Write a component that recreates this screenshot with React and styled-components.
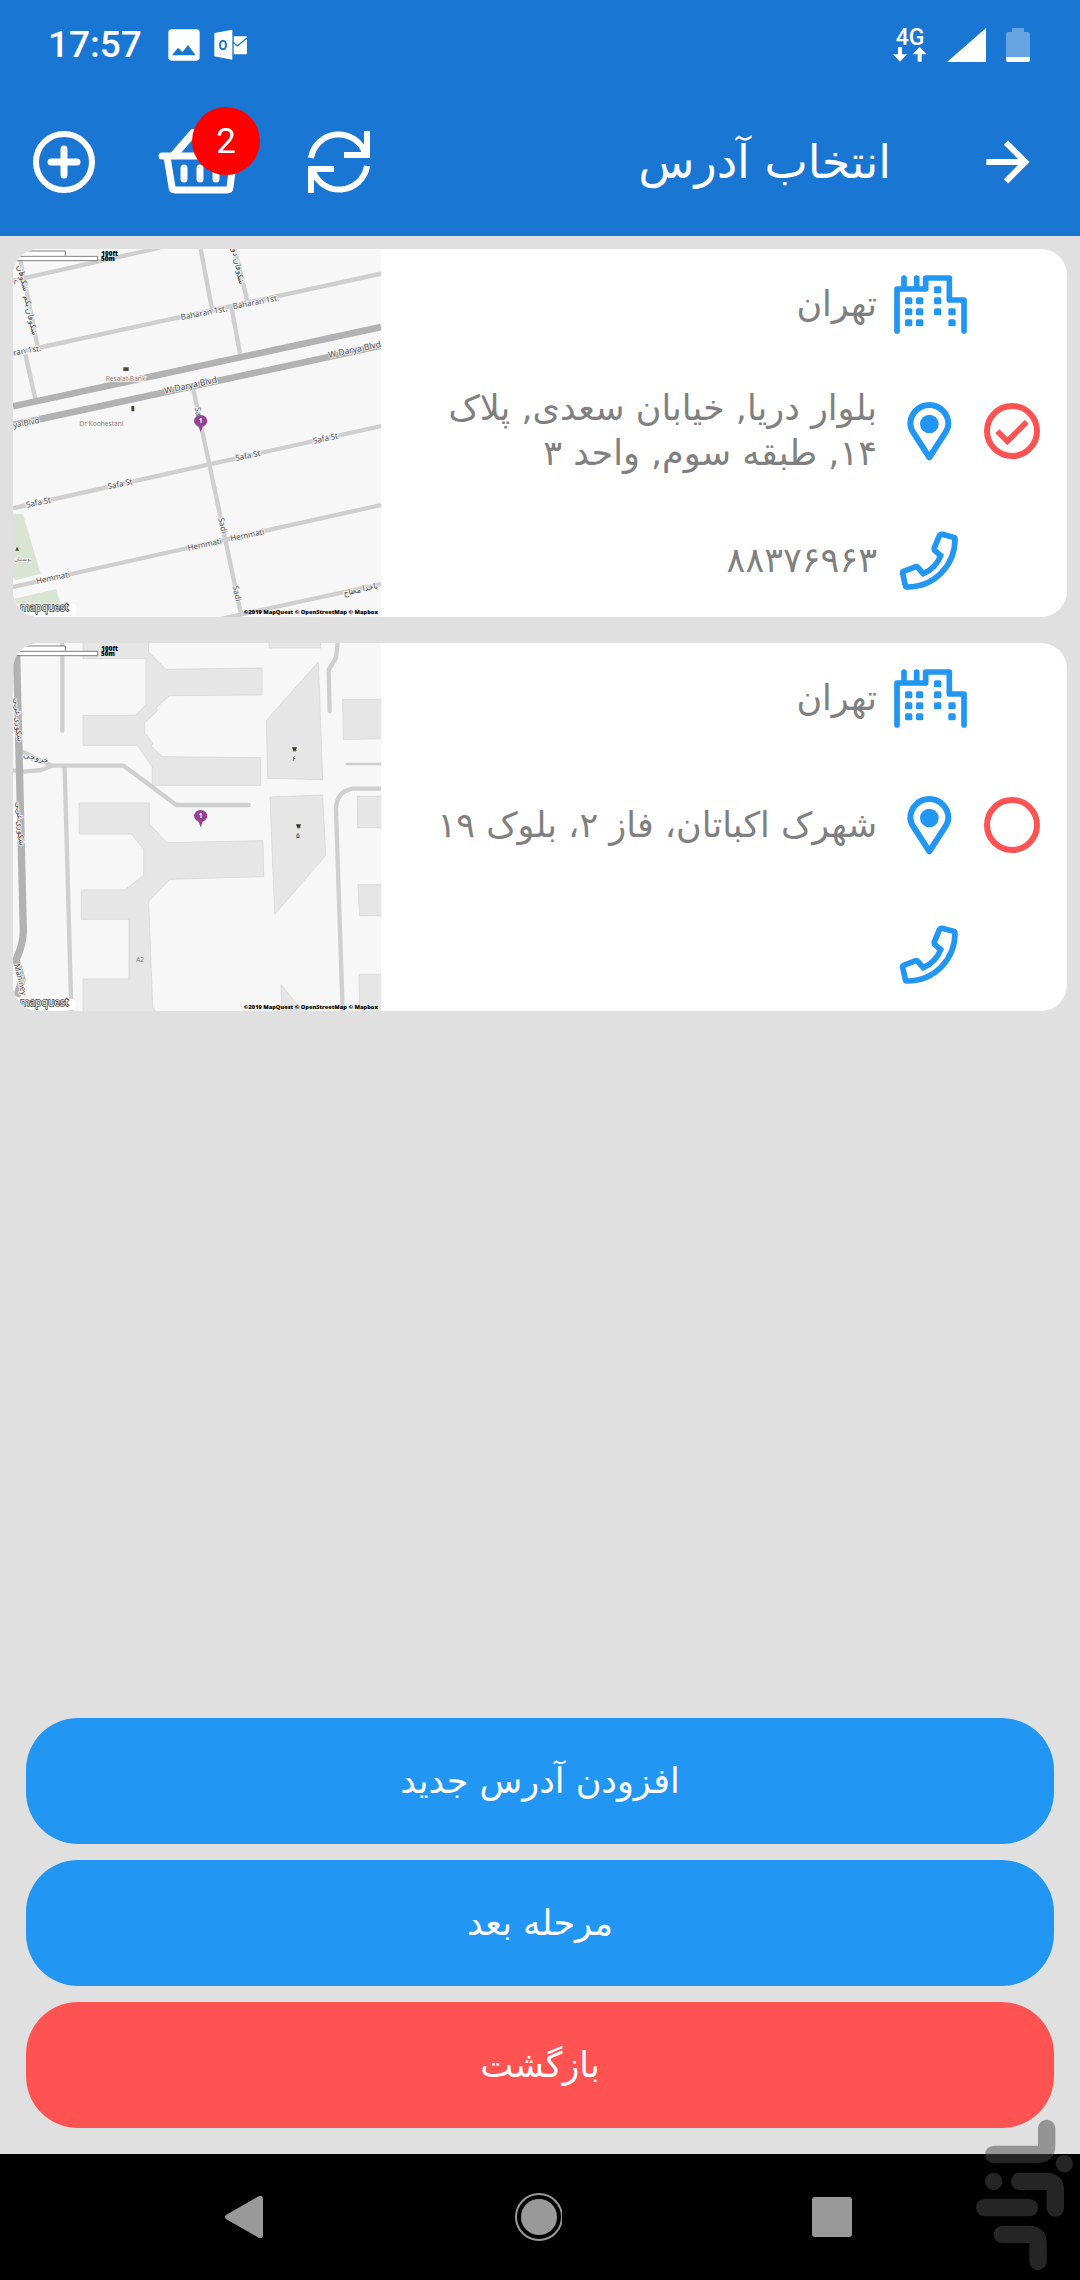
import React, { useState } from 'react';
import styled, { createGlobalStyle } from 'styled-components';

const GlobalStyle = createGlobalStyle`
  * {
    box-sizing: border-box;
  }

  body {
    margin: 0;
    background-color: #e0e0e0;
    font-family: "DejaVu Sans", sans-serif;
  }
`;

const Page = styled.div`
  position: relative;
  min-height: 100vh;
  display: flex;
  flex-direction: column;
`;

const Header = styled.header`
  background-color: #1976d2;
  color: #fff;
`;

const StatusBar = styled.div`
  display: flex;
  align-items: center;
  justify-content: space-between;
  height: 90px;
  padding: 0 50px 0 48px;
  font-family: Roboto, sans-serif;
`;

const StatusGroup = styled.div`
  display: flex;
  align-items: center;
  gap: ${(props) => props.$gap}px;
`;

const Clock = styled.span`
  margin-right: 12px;
  font-size: 37px;
  font-weight: 500;
  line-height: 44px;
`;

const Network = styled.div`
  display: flex;
  flex-direction: column;
  align-items: center;
  font-size: 23px;
  font-weight: 500;
  line-height: 19px;
`;

const Toolbar = styled.div`
  display: flex;
  align-items: center;
  height: 146px;
  padding: 0 50px 2px 33px;
`;

const IconButton = styled.button`
  position: relative;
  display: flex;
  margin: 0 ${(props) => props.$gap || 0}px 0 0;
  padding: 0;
  border: 0;
  background: none;
  color: inherit;
  cursor: pointer;
`;

const Badge = styled.span`
  position: absolute;
  top: -22px;
  right: -18px;
  width: 68px;
  height: 68px;
  border-radius: 50%;
  background-color: #ff0000;
  font-family: Roboto, sans-serif;
  font-size: 35px;
  line-height: 70px;
  text-align: center;
`;

const Title = styled.h1`
  flex: 1;
  margin: 0 95px 0 0;
  direction: rtl;
  font-size: 46px;
  font-weight: 400;
  line-height: 60px;
`;

const AddressList = styled.main`
  flex: 1;
  display: flex;
  flex-direction: column;
  gap: 26px;
  padding: 13px;
`;

const Card = styled.article`
  display: flex;
  min-height: 368px;
  overflow: hidden;
  border-radius: 26px;
  background-color: #fff;
`;

const MapImage = styled.svg`
  flex: none;
  width: 368px;
  height: 368px;
  background-color: #f7f7f7;
  font-family: "Open Sans", sans-serif;
`;

const Details = styled.div`
  flex: 1;
  display: grid;
  grid-template-columns: 56px 73px 1fr;
  grid-template-rows: 110px 1fr 114px;
  align-items: center;
  column-gap: 17px;
  padding: 0 27px 0 24px;
  direction: rtl;
  color: #2296f3;
`;

const Pick = styled.div`
  grid-row: 2;
  grid-column: 1;
  display: grid;
  color: #ff5353;

  > * {
    grid-area: 1 / 1;
  }

  svg {
    pointer-events: none;
  }
`;

const Radio = styled.input`
  appearance: none;
  width: 56px;
  height: 56px;
  margin: 0;
  border: 6px solid #ff5353;
  border-radius: 50%;
  cursor: pointer;
`;

const IconCell = styled.div`
  grid-column: 2;
  grid-row: ${(props) => props.$row};
  display: flex;
  justify-content: center;
`;

const DetailText = styled.label`
  grid-column: 3;
  grid-row: ${(props) => props.$row};
  color: #808080;
  font-size: 35px;
  line-height: 45px;
`;

const Actions = styled.div`
  display: flex;
  flex-direction: column;
  gap: 16px;
  padding: 26px;
`;

const ActionButton = styled.button`
  height: 126px;
  border: 0;
  border-radius: 52px;
  background-color: ${(props) => (props.$danger ? '#ff5353' : '#2296f3')};
  color: #fff;
  font-family: inherit;
  font-size: 35px;
  line-height: 45px;
  cursor: pointer;
`;

const NavBar = styled.nav`
  display: flex;
  align-items: center;
  justify-content: space-between;
  height: 126px;
  padding: 0 228px 0 225px;
  background-color: #000;
  color: #999;
`;

const StoreMark = styled.svg`
  position: absolute;
  right: 6px;
  bottom: 8px;
  width: 99px;
  height: 154px;
  opacity: 0.5;
  pointer-events: none;
`;

const PictureIcon = () => (
  <svg width="32" height="32" viewBox="53 56 96 96">
    <rect x="54" y="57" width="94" height="94" rx="10" fill="#fff" />
    <path d="M65 135L83 112L96 126L113 104L136 135Z" fill="#1976d2" />
  </svg>
);

const OutlookIcon = () => (
  <svg width="34" height="32" viewBox="191 56 102 96">
    <path d="M192 68L246 58V148L192 138Z" fill="#fff" />
    <rect x="250" y="78" width="40" height="54" rx="3" fill="#fff" />
    <path d="M248 96L261 107L291 82" fill="none" stroke="#1976d2" strokeWidth="4" />
    <ellipse cx="218" cy="104" rx="9" ry="13" fill="none" stroke="#1976d2" strokeWidth="6" />
  </svg>
);

const DataArrows = () => (
  <svg width="34" height="15" viewBox="46 109 102 45" fill="#fff">
    <path d="M61 109H73V131H88L67 153L46 131H61Z" />
    <path d="M120 153H132V131H147L126 109L105 131H120Z" />
  </svg>
);

const SignalIcon = () => (
  <svg width="39" height="34" viewBox="0 0 39 34" fill="#fff">
    <path d="M39 0V34H0Z" />
  </svg>
);

const BatteryIcon = () => (
  <svg width="24" height="34" viewBox="0 0 24 34">
    <path d="M6 0H18V4H22Q24 4 24 6V29H0V6Q0 4 2 4H6Z" fill="#66a4e1" />
    <path d="M0 29H24V32Q24 34 22 34H2Q0 34 0 32Z" fill="#fff" />
  </svg>
);

const AddIcon = () => (
  <svg width="62" height="62" viewBox="0 0 62 62" fill="none" stroke="currentColor">
    <circle cx="31" cy="31" r="28" strokeWidth="6" />
    <path d="M31 18V44M18 31H44" strokeWidth="7" strokeLinecap="round" />
  </svg>
);

const BasketIcon = () => (
  <svg width="84" height="66" viewBox="0 0 84 66" fill="none" stroke="currentColor" strokeWidth="7" strokeLinecap="round" strokeLinejoin="round">
    <path d="M4 27H80" />
    <path d="M9 28L14 58Q14 61 17 61H69Q72 61 72 58L76 28" />
    <path d="M16 26L36 3M68 26L48 3" strokeWidth="8" />
    <path d="M26 39V50M42 39V50M58 39V50" />
  </svg>
);

const SyncIcon = () => (
  <svg width="64" height="62" viewBox="0 0 64 62" fill="none" stroke="currentColor" strokeWidth="6">
    <path d="M4 27A28 28 0 0 1 58 22M60 35A28 28 0 0 1 6 40" />
    <path d="M60 0V24H37M4 62V38H27" />
  </svg>
);

const ArrowIcon = () => (
  <svg width="44" height="44" viewBox="319 390 132 132" fill="none" stroke="currentColor" strokeWidth="18">
    <path d="M320 456H440M379 398L437 456L379 514" />
  </svg>
);

const CityIcon = () => (
  <svg width="73" height="59" viewBox="42 44 219 177" fill="none" stroke="currentColor" strokeWidth="17" strokeLinecap="round" strokeLinejoin="round">
    <path d="M51 212V86H137V53H208V119H252V212M72 53V86M110 53V86" />
    <g fill="currentColor" stroke="none">
      {[[75, 111], [75, 144], [75, 177], [108, 111], [108, 144], [108, 177], [162, 78], [162, 111], [162, 144], [205, 144], [205, 177]].map(([x, y]) => (
        <rect key={`${x}-${y}`} x={x} y={y} width="22" height="21" rx="5" />
      ))}
    </g>
  </svg>
);

const PinIcon = () => (
  <svg width="47" height="59" viewBox="79 425 141 177" fill="none" stroke="currentColor" strokeWidth="18" strokeLinejoin="round">
    <path d="M146 591L100 520Q89 504 89 491A57 57 0 0 1 203 491Q203 504 192 520Z" />
    <circle cx="146" cy="491" r="28" fill="currentColor" stroke="none" />
  </svg>
);

const PhoneIcon = () => (
  <svg width="63" height="59" viewBox="55 808 189 177" fill="none" stroke="currentColor" strokeWidth="17">
    <path d="M184 818L218 827Q223 828 223 833C223 910 162 976 80 976Q75 976 74 971L66 935Q65 931 69 929L105 915Q109 914 112 918L128 936C150 928 172 905 180 882L162 866Q160 863 161 859L176 822Q179 817 184 818Z" />
  </svg>
);

const CheckMark = () => (
  <svg width="56" height="56" viewBox="312 432 168 168" fill="none" stroke="currentColor" strokeWidth="17">
    <path d="M352 517L382 547L440 489" />
  </svg>
);

const Label = ({ x, y, turn = 0, size = 24, color = '#444', anchor = 'start', children }) => (
  <text
    x={x}
    y={y}
    fontSize={size}
    fill={color}
    textAnchor={anchor}
    stroke="#f7f7f7"
    strokeWidth="5"
    paintOrder="stroke"
    transform={`rotate(${turn} ${x} ${y})`}
  >
    {children}
  </text>
);

const MapOverlay = () => (
  <>
    <path d="M602 592L596 575C588 572 582 565 582 558A20 18 0 0 1 622 558C622 565 616 572 608 575Z" fill="#954292" />
    <text x="602" y="564" fontSize="20" fontWeight="700" fill="#fff" textAnchor="middle">1</text>
    <path d="M39 48H196V62H39ZM39 64H293V77H39Z" fill="#fff" />
    <path d="M39 48H196V62M39 64H293V77H39" fill="none" stroke="#444" strokeWidth="2" />
    <text x="304" y="63" fontSize="19" fontWeight="800" fill="#000">100ft</text>
    <text x="303" y="78" fontSize="19" fontWeight="800" fill="#000">50m</text>
    <rect x="45" y="1106" width="184" height="34" rx="14" fill="#fff" />
    <text x="60" y="1129" fontSize="31" fill="#fff" stroke="#333" strokeWidth="4" paintOrder="stroke">mapquest</text>
    <text x="1134" y="1137" fontSize="17" fontWeight="800" fill="#000" textAnchor="end">
      ©2019 MapQuest © OpenStreetMap © Mapbox
    </text>
  </>
);

const StreetMap = () => (
  <MapImage viewBox="39 42 1104 1104" role="img" aria-label="W Darya Blvd">
    <path d="M39 836L69 838L122 1016L48 1036L39 1026ZM39 1092L168 1062L182 1106H39Z" fill="#d9e5d2" />
    <g fill="none" stroke="#cfcfcf" strokeWidth="13">
      <path d="M39 137L480 38M39 355L1143 116M39 820L628 688L1143 573M39 1056L1143 810M660 1152L1143 1047" />
      <path d="M54 42L113 335M76 358L106 492M602 42L636 222M704 42L742 197M694 214L720 356M580 464L628 688L722 1132" />
    </g>
    <path d="M39 514L1143 276M39 570L1143 332" fill="none" stroke="#b2b2b2" strokeWidth="20" />
    <Label x={41} y={362} turn={-10}>ran 1st.</Label>
    <Label x={41} y={148}>r</Label>
    <Label x={544} y={255} turn={-11}>Baharan 1st.</Label>
    <Label x={700} y={223} turn={-11}>Baharan 1st.</Label>
    <Label x={41} y={579} turn={-11}>ya Blvd</Label>
    <Label x={495} y={476} turn={-12} size={26}>W Darya Blvd</Label>
    <Label x={987} y={369} turn={-12} size={26}>W Darya Blvd</Label>
    <Label x={584} y={518} turn={80}>Sa</Label>
    <Label x={80} y={818} turn={-12}>Safa St</Label>
    <Label x={325} y={763} turn={-12}>Safa St</Label>
    <Label x={708} y={678} turn={-12}>Safa St</Label>
    <Label x={941} y={626} turn={-12}>Safa St</Label>
    <Label x={110} y={1047} turn={-12}>Hemmati</Label>
    <Label x={565} y={947} turn={-12}>Hemmati</Label>
    <Label x={693} y={919} turn={-12}>Hemmati</Label>
    <Label x={655} y={850} turn={78}>Sadi</Label>
    <Label x={698} y={1054} turn={78}>Sadi</Label>
    <Label x={317} y={439} size={20} color="#777">Resalat Bank</Label>
    <Label x={238} y={573} size={20} color="#777">Dr Koohestani</Label>
    <Label x={68} y={979} size={17} color="#777" anchor="middle">بوستان</Label>
    <Label x={52} y={92} turn={78}>شکوفان</Label>
    <Label x={71} y={184} turn={78}>شکوفان یکم</Label>
    <Label x={696} y={42} turn={78}>شکوفان دو</Label>
    <Label x={1031} y={1082} turn={-12}>باخدا محتاج</Label>
    <path d="M370 397H386V408H370ZM394 513H403V529H394ZM46 947L51 935L57 947Z" fill="#4b4638" />
    <MapOverlay />
  </MapImage>
);

const BlockMap = () => (
  <MapImage viewBox="39 39 1104 1104" role="img" aria-label="A2">
    <g fill="#e6e6e6" stroke="#d2d2d2" strokeWidth="2">
      <path d="M249 36H446V66L498 118L786 114V195L508 197L468 234L472 243L434 278V308L460 341L453 346L485 380L782 383V466H457V411L412 346H249V256H406L438 224V86H249Z" />
      <path d="M237 519H448V581L500 638L789 632L791 740L510 748L446 814L458 1130L470 1146H249V1047H387V868H244V780H374L431 736V658L394 612H238Z" />
      <path d="M807 36H962V54H807ZM955 96L968 449L803 445L799 271ZM810 501L968 495L977 677L824 853Z" />
      <path d="M1028 208H1146V326L1030 329ZM1072 499H1146V593H1073ZM1074 764H1146V857H1079ZM1077 1033H1146V1146H1079ZM843 1064L908 1143H846Z" />
    </g>
    <g fill="none" stroke="#cfcfcf" strokeWidth="13" strokeLinecap="round" strokeLinejoin="round">
      <path d="M187 39V302M64 364L156 407H371L529 525H746M39 421L70 425L124 420L156 407M194 414L214 1143" />
      <path d="M1013 39L1008 84L986 120L989 243M1143 476H1056Q1008 486 1008 540L1028 1143" />
      <path d="M1040 402H1143" strokeWidth="7" />
    </g>
    <path d="M39 110Q46 90 50 76L70 905Q70 940 48 990L66 1050L50 1100" fill="none" stroke="#b2b2b2" strokeWidth="22" />
    <Label x={42} y={205} turn={86}>شکوری غربی</Label>
    <Label x={48} y={516} turn={86}>شکوری غربی</Label>
    <Label x={70} y={381} turn={14}>خروجی</Label>
    <Label x={42} y={1004} turn={76}>Mahiney</Label>
    <text x="420" y="995" fontSize="20" fill="#777" textAnchor="middle">A2</text>
    <path d="M876 352H891L888 360H879ZM879 361H889V364H879ZM888 583H903L900 591H891ZM891 592H901V595H891Z" fill="#3d362c" />
    <text x="883" y="392" fontSize="20" fill="#333" textAnchor="middle">۶</text>
    <text x="894" y="625" fontSize="20" fill="#333" textAnchor="middle">۵</text>
    <MapOverlay />
  </MapImage>
);

const addresses = [
  {
    id: 'darya',
    city: 'تهران',
    address: 'بلوار دریا, خیابان سعدی, پلاک ۱۴, طبقه سوم, واحد ۳',
    phone: '۸۸۳۷۶۹۶۳',
    Map: StreetMap,
  },
  {
    id: 'ekbatan',
    city: 'تهران',
    address: 'شهرک اکباتان، فاز ۲، بلوک ۱۹',
    phone: '',
    Map: BlockMap,
  },
];

const AddressCard = ({ item, selected, onSelect }) => (
  <Card>
    <item.Map />
    <Details>
      <Pick>
        <Radio
          type="radio"
          name="address"
          id={item.id}
          checked={selected}
          onChange={() => onSelect(item.id)}
        />
        {selected && <CheckMark />}
      </Pick>
      <IconCell $row={1}><CityIcon /></IconCell>
      <DetailText $row={1} htmlFor={item.id}>{item.city}</DetailText>
      <IconCell $row={2}><PinIcon /></IconCell>
      <DetailText $row={2} htmlFor={item.id}>{item.address}</DetailText>
      <IconCell $row={3}><PhoneIcon /></IconCell>
      {item.phone && <DetailText $row={3} htmlFor={item.id}>{item.phone}</DetailText>}
    </Details>
  </Card>
);

function App() {
  const [selected, setSelected] = useState('darya');

  return (
    <Page>
      <GlobalStyle />
      <Header>
        <StatusBar>
          <StatusGroup $gap={14}>
            <Clock>17:57</Clock>
            <PictureIcon />
            <OutlookIcon />
          </StatusGroup>
          <StatusGroup $gap={20}>
            <Network>
              4G
              <DataArrows />
            </Network>
            <SignalIcon />
            <BatteryIcon />
          </StatusGroup>
        </StatusBar>
        <Toolbar>
          <IconButton $gap={63} aria-label="افزودن"><AddIcon /></IconButton>
          <IconButton $gap={65} aria-label="سبد خرید">
            <BasketIcon />
            <Badge>2</Badge>
          </IconButton>
          <IconButton aria-label="به‌روزرسانی"><SyncIcon /></IconButton>
          <Title>انتخاب آدرس</Title>
          <IconButton aria-label="بازگشت"><ArrowIcon /></IconButton>
        </Toolbar>
      </Header>
      <AddressList>
        {addresses.map((item) => (
          <AddressCard
            key={item.id}
            item={item}
            selected={item.id === selected}
            onSelect={setSelected}
          />
        ))}
      </AddressList>
      <Actions>
        <ActionButton>افزودن آدرس جدید</ActionButton>
        <ActionButton>مرحله بعد</ActionButton>
        <ActionButton $danger>بازگشت</ActionButton>
      </Actions>
      <NavBar>
        <IconButton aria-label="Back">
          <svg width="39" height="42" viewBox="0 0 39 42" fill="currentColor">
            <path d="M1 19L34 0Q38 -1 38 3V39Q38 43 34 42L1 23Q-1 21 1 19Z" />
          </svg>
        </IconButton>
        <IconButton aria-label="Home">
          <svg width="48" height="48" viewBox="0 0 48 48" fill="currentColor">
            <circle cx="25" cy="24" r="23" fill="none" stroke="currentColor" strokeWidth="2" />
            <circle cx="25" cy="24" r="18" />
          </svg>
        </IconButton>
        <IconButton aria-label="Recents">
          <svg width="40" height="40" viewBox="0 0 40 40" fill="currentColor">
            <rect width="40" height="40" rx="3" />
          </svg>
        </IconButton>
      </NavBar>
      <StoreMark viewBox="405 115 297 462" fill="none" stroke="#4b4b4b" strokeWidth="52" strokeLinecap="round">
        <path d="M620 146V198Q620 224 594 224H461M539 305H620Q646 305 646 331V385M434 384H568M487 464H568Q594 464 594 490V545" />
        <path d="M673 252V252M461 305V305" />
      </StoreMark>
    </Page>
  );
}

export default App;
